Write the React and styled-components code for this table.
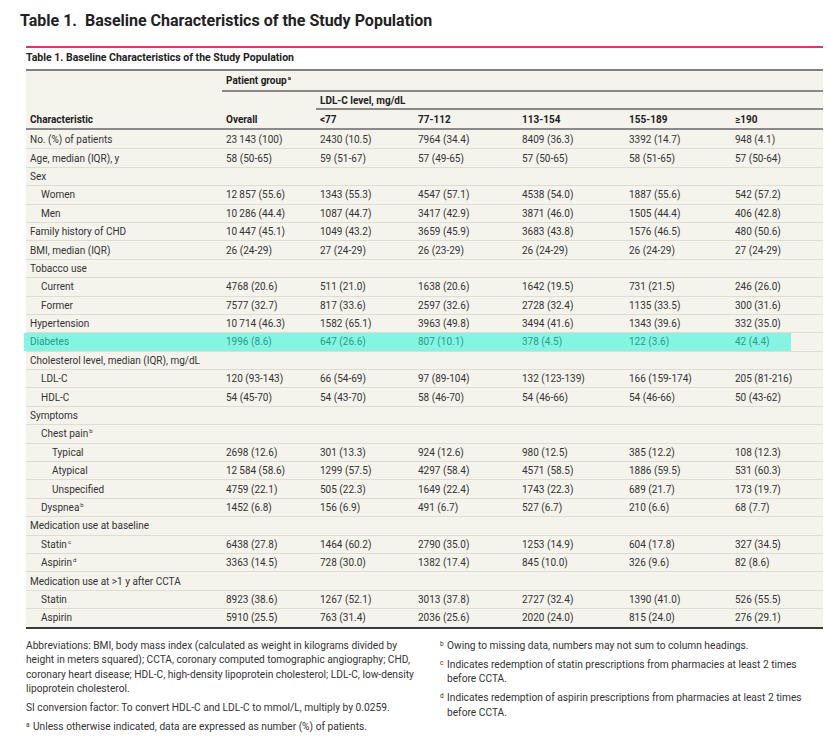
import React from "react";
import styled, { createGlobalStyle } from "styled-components";

const GlobalStyle = createGlobalStyle`
  body {
    margin: 0;
    background: #fff;
    font-family: Roboto, "Liberation Sans", sans-serif;
    color: #333;
  }
`;

const Page = styled.div`
  width: 829px;
  height: 741px;
  overflow: hidden;
`;

const Title = styled.h1`
  margin: 11px 0 0 20px;
  font-size: 16px;
  line-height: 20px;
  font-weight: 700;
  color: #222;
  white-space: pre;
`;

const Figure = styled.div`
  margin: 15px 6px 0 26px;
  border-top: 2px solid #e8336a;
`;

const Caption = styled.div`
  padding: 3px 0 4px;
  font-size: 10.5px;
  line-height: 14px;
  font-weight: 700;
  color: #222;
`;

const Table = styled.div`
  background: #f4f3ec;
  border-top: 2px solid #808080;
  border-bottom: 2px solid #3c3c3c;
  font-size: 10px;
`;

const COLS = "196px 94px 98px 104px 107px 106px 92px";

const HeadRow = styled.div`
  display: grid;
  grid-template-columns: ${COLS};
  height: ${(p) => p.$h}px;
  border-bottom: ${(p) => (p.$line ? "2px solid #8a8a8a" : "none")};
`;

const HeadCell = styled.div`
  grid-column: ${(p) => p.$span || "auto"};
  display: flex;
  align-items: center;
  padding-left: 4px;
  font-weight: 700;
  color: #222;
  border-bottom: ${(p) => (p.$line ? "2px solid #8a8a8a" : "none")};
`;

const Row = styled.div`
  position: relative;
  display: grid;
  grid-template-columns: ${COLS};
  height: 18.4px;
  box-sizing: border-box;
  border-top: ${(p) => (p.$first ? "none" : "1px solid #dedcd3")};
  color: ${(p) => (p.$hl ? "#2a9b8c" : "#333")};

  &::before {
    content: "";
    display: ${(p) => (p.$hl ? "block" : "none")};
    position: absolute;
    left: -2px;
    right: 32px;
    top: 0;
    bottom: 0;
    background: #86f4e3;
  }
`;

const Cell = styled.div`
  position: relative;
  display: flex;
  align-items: center;
  padding-left: ${(p) => 4 + (p.$level || 0) * 11}px;
  white-space: nowrap;
`;

const Sup = styled.sup`
  font-size: 6px;
  line-height: 0;
  margin-left: 1px;
  vertical-align: 4px;
`;

const Notes = styled.div`
  display: grid;
  grid-template-columns: 390px 370px;
  column-gap: 24px;
  margin: 10px 0 0 26px;
  font-size: 10.2px;
  line-height: 14.5px;
  color: #333;
`;

const NoteCol = styled.div`
  display: flex;
  flex-direction: column;
  gap: 4.5px;
`;

const Note = styled.div`
  display: flex;
`;

const Marker = styled.span`
  flex: 0 0 7px;
  font-size: 6.5px;
  line-height: 10px;
`;

const Line = styled.span`
  display: block;
  white-space: nowrap;
`;

const rows = [
  { label: "No. (%) of patients", v: ["23\u2009143 (100)", "2430 (10.5)", "7964 (34.4)", "8409 (36.3)", "3392 (14.7)", "948 (4.1)"] },
  { label: "Age, median (IQR), y", v: ["58 (50-65)", "59 (51-67)", "57 (49-65)", "57 (50-65)", "58 (51-65)", "57 (50-64)"] },
  { label: "Sex" },
  { label: "Women", level: 1, v: ["12\u2009857 (55.6)", "1343 (55.3)", "4547 (57.1)", "4538 (54.0)", "1887 (55.6)", "542 (57.2)"] },
  { label: "Men", level: 1, v: ["10\u2009286 (44.4)", "1087 (44.7)", "3417 (42.9)", "3871 (46.0)", "1505 (44.4)", "406 (42.8)"] },
  { label: "Family history of CHD", v: ["10\u2009447 (45.1)", "1049 (43.2)", "3659 (45.9)", "3683 (43.8)", "1576 (46.5)", "480 (50.6)"] },
  { label: "BMI, median (IQR)", v: ["26 (24-29)", "27 (24-29)", "26 (23-29)", "26 (24-29)", "26 (24-29)", "27 (24-29)"] },
  { label: "Tobacco use" },
  { label: "Current", level: 1, v: ["4768 (20.6)", "511 (21.0)", "1638 (20.6)", "1642 (19.5)", "731 (21.5)", "246 (26.0)"] },
  { label: "Former", level: 1, v: ["7577 (32.7)", "817 (33.6)", "2597 (32.6)", "2728 (32.4)", "1135 (33.5)", "300 (31.6)"] },
  { label: "Hypertension", v: ["10\u2009714 (46.3)", "1582 (65.1)", "3963 (49.8)", "3494 (41.6)", "1343 (39.6)", "332 (35.0)"] },
  { label: "Diabetes", hl: true, v: ["1996 (8.6)", "647 (26.6)", "807 (10.1)", "378 (4.5)", "122 (3.6)", "42 (4.4)"] },
  { label: "Cholesterol level, median (IQR), mg/dL" },
  { label: "LDL-C", level: 1, v: ["120 (93-143)", "66 (54-69)", "97 (89-104)", "132 (123-139)", "166 (159-174)", "205 (81-216)"] },
  { label: "HDL-C", level: 1, v: ["54 (45-70)", "54 (43-70)", "58 (46-70)", "54 (46-66)", "54 (46-66)", "50 (43-62)"] },
  { label: "Symptoms" },
  { label: "Chest pain", sup: "b", level: 1 },
  { label: "Typical", level: 2, v: ["2698 (12.6)", "301 (13.3)", "924 (12.6)", "980 (12.5)", "385 (12.2)", "108 (12.3)"] },
  { label: "Atypical", level: 2, v: ["12\u2009584 (58.6)", "1299 (57.5)", "4297 (58.4)", "4571 (58.5)", "1886 (59.5)", "531 (60.3)"] },
  { label: "Unspecified", level: 2, v: ["4759 (22.1)", "505 (22.3)", "1649 (22.4)", "1743 (22.3)", "689 (21.7)", "173 (19.7)"] },
  { label: "Dyspnea", sup: "b", level: 1, v: ["1452 (6.8)", "156 (6.9)", "491 (6.7)", "527 (6.7)", "210 (6.6)", "68 (7.7)"] },
  { label: "Medication use at baseline" },
  { label: "Statin", sup: "c", level: 1, v: ["6438 (27.8)", "1464 (60.2)", "2790 (35.0)", "1253 (14.9)", "604 (17.8)", "327 (34.5)"] },
  { label: "Aspirin", sup: "d", level: 1, v: ["3363 (14.5)", "728 (30.0)", "1382 (17.4)", "845 (10.0)", "326 (9.6)", "82 (8.6)"] },
  { label: "Medication use at >1 y after CCTA" },
  { label: "Statin", level: 1, v: ["8923 (38.6)", "1267 (52.1)", "3013 (37.8)", "2727 (32.4)", "1390 (41.0)", "526 (55.5)"] },
  { label: "Aspirin", level: 1, v: ["5910 (25.5)", "763 (31.4)", "2036 (25.6)", "2020 (24.0)", "815 (24.0)", "276 (29.1)"] },
];

const heads = ["Characteristic", "Overall", "<77", "77-112", "113-154", "155-189", "≥190"];

const abbreviations = [
  "Abbreviations: BMI, body mass index (calculated as weight in kilograms divided by",
  "height in meters squared); CCTA, coronary computed tomographic angiography; CHD,",
  "coronary heart disease; HDL-C, high-density lipoprotein cholesterol; LDL-C, low-density",
  "lipoprotein cholesterol.",
];

const rightNotes = [
  { mark: "b", lines: ["Owing to missing data, numbers may not sum to column headings."] },
  { mark: "c", lines: ["Indicates redemption of statin prescriptions from pharmacies at least 2 times", "before CCTA."] },
  { mark: "d", lines: ["Indicates redemption of aspirin prescriptions from pharmacies at least 2 times", "before CCTA."] },
];

export default function App() {
  return (
    <Page>
      <GlobalStyle />
      <Title>{"Table 1.  Baseline Characteristics of the Study Population"}</Title>
      <Figure>
        <Caption>Table 1. Baseline Characteristics of the Study Population</Caption>
        <Table>
          <HeadRow $h={21}>
            <HeadCell />
            <HeadCell $span="2 / 8" $line>
              <span>
                Patient group<Sup>a</Sup>
              </span>
            </HeadCell>
          </HeadRow>
          <HeadRow $h={18}>
            <HeadCell />
            <HeadCell />
            <HeadCell $span="3 / 8" $line>
              LDL-C level, mg/dL
            </HeadCell>
          </HeadRow>
          <HeadRow $h={18} $line>
            {heads.map((h) => (
              <HeadCell key={h}>{h}</HeadCell>
            ))}
          </HeadRow>
          {rows.map((r, i) => (
            <Row key={i} $hl={r.hl} $first={i === 0}>
              <Cell $level={r.level}>
                <span>
                  {r.label}
                  {r.sup && <Sup>{r.sup}</Sup>}
                </span>
              </Cell>
              {(r.v || ["", "", "", "", "", ""]).map((v, j) => (
                <Cell key={j}>{v}</Cell>
              ))}
            </Row>
          ))}
        </Table>
      </Figure>
      <Notes>
        <NoteCol>
          <div>
            {abbreviations.map((l) => (
              <Line key={l}>{l}</Line>
            ))}
          </div>
          <Line>SI conversion factor: To convert HDL-C and LDL-C to mmol/L, multiply by 0.0259.</Line>
          <Note>
            <Marker>a</Marker>
            <Line>Unless otherwise indicated, data are expressed as number (%) of patients.</Line>
          </Note>
        </NoteCol>
        <NoteCol>
          {rightNotes.map((n) => (
            <Note key={n.mark}>
              <Marker>{n.mark}</Marker>
              <div>
                {n.lines.map((l) => (
                  <Line key={l}>{l}</Line>
                ))}
              </div>
            </Note>
          ))}
        </NoteCol>
      </Notes>
    </Page>
  );
}
